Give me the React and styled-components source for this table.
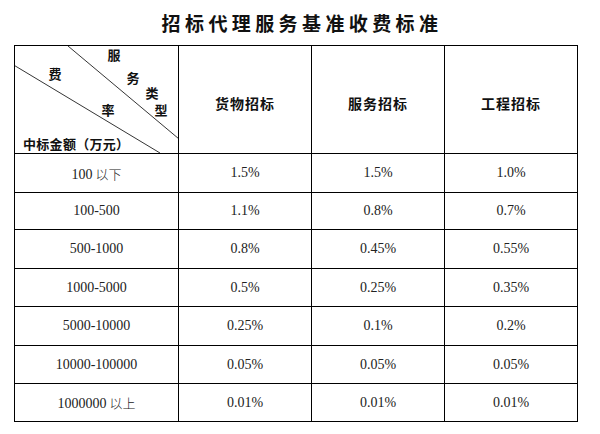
import React from "react"
import styled, { createGlobalStyle } from "styled-components"

const GlobalStyle = createGlobalStyle`
  html, body {
    margin: 0;
    padding: 0;
    background: #fff;
  }
`

const Page = styled.div`
  width: 600px;
  height: 434px;
  padding: 0 0 0 14px;
  box-sizing: border-box;
  background: #fff;
`

const Title = styled.h1`
  margin: 0;
  height: 45px;
  width: 572px;
  display: flex;
  align-items: center;
  justify-content: center;
  padding: 0 0 1px 4px;
  box-sizing: border-box;
  font-family: "Noto Sans CJK SC", sans-serif;
  font-size: 19px;
  font-weight: 700;
  letter-spacing: 4.4px;
  color: #111;
`

const Table = styled.table`
  border-collapse: collapse;
  table-layout: fixed;
  width: 559px;
`

const HeadRow = styled.tr`
  height: 108px;
`

const Row = styled.tr`
  height: ${p => p.$h}px;
`

const Corner = styled.th`
  position: relative;
  width: 163px;
  padding: 0;
  border: 1px solid #000;
  font-family: "Noto Sans CJK SC", sans-serif;
  font-weight: 700;
  font-size: 13px;
  color: #111;
`

const HeadCell = styled.th`
  width: 132px;
  border: 1px solid #000;
  padding: 6px 0 0;
  font-family: "Noto Sans CJK SC", sans-serif;
  font-size: 14px;
  font-weight: 700;
  letter-spacing: 1px;
  color: #111;
`

const Cell = styled.td`
  border: 1px solid #000;
  padding: 0;
  text-align: center;
  vertical-align: middle;
  font-family: "Liberation Serif", "Noto Sans CJK SC", serif;
  font-size: 14px;
  color: #222;
`

const Cjk = styled.span`
  font-family: "Noto Sans CJK SC", sans-serif;
  font-size: 13px;
  font-weight: 300;
`

const Diagonals = styled.svg`
  position: absolute;
  left: 0;
  top: 0;
  width: 100%;
  height: 100%;
`

const Tag = styled.span`
  position: absolute;
  line-height: 1;
  transform: translate(-50%, -50%);
`

const Amount = styled.span`
  position: absolute;
  left: 8px;
  bottom: 3px;
  line-height: 1;
  letter-spacing: 0.3px;
`

const tags = [
  ["服", 99, 8],
  ["务", 118, 31],
  ["类", 137, 46],
  ["型", 146, 63],
  ["费", 40, 27],
  ["率", 93, 63],
]

const rows = [
  ["100", "以下", "1.5%", "1.5%", "1.0%", 39],
  ["100-500", "", "1.1%", "0.8%", "0.7%", 37],
  ["500-1000", "", "0.8%", "0.45%", "0.55%", 39],
  ["1000-5000", "", "0.5%", "0.25%", "0.35%", 38],
  ["5000-10000", "", "0.25%", "0.1%", "0.2%", 39],
  ["10000-100000", "", "0.05%", "0.05%", "0.05%", 38],
  ["1000000", "以上", "0.01%", "0.01%", "0.01%", 38],
]

const App = () => (
  <Page>
    <GlobalStyle />
    <Title>招标代理服务基准收费标准</Title>
    <Table>
      <thead>
        <HeadRow>
          <Corner>
            <Diagonals viewBox="0 0 163 108" preserveAspectRatio="none">
              <line x1="0" y1="20" x2="145" y2="108" stroke="#333" strokeWidth="1" />
              <line x1="53" y1="0" x2="163" y2="93" stroke="#333" strokeWidth="1" />
            </Diagonals>
            {tags.map(([t, x, y]) => (
              <Tag key={t} style={{ left: x, top: y }}>{t}</Tag>
            ))}
            <Amount>中标金额（万元）</Amount>
          </Corner>
          <HeadCell>货物招标</HeadCell>
          <HeadCell>服务招标</HeadCell>
          <HeadCell>工程招标</HeadCell>
        </HeadRow>
      </thead>
      <tbody>
        {rows.map(([range, suffix, a, b, c, h]) => (
          <Row key={range} $h={h}>
            <Cell>
              {range}
              {suffix && <Cjk> {suffix}</Cjk>}
            </Cell>
            <Cell>{a}</Cell>
            <Cell>{b}</Cell>
            <Cell>{c}</Cell>
          </Row>
        ))}
      </tbody>
    </Table>
  </Page>
)

export default App
